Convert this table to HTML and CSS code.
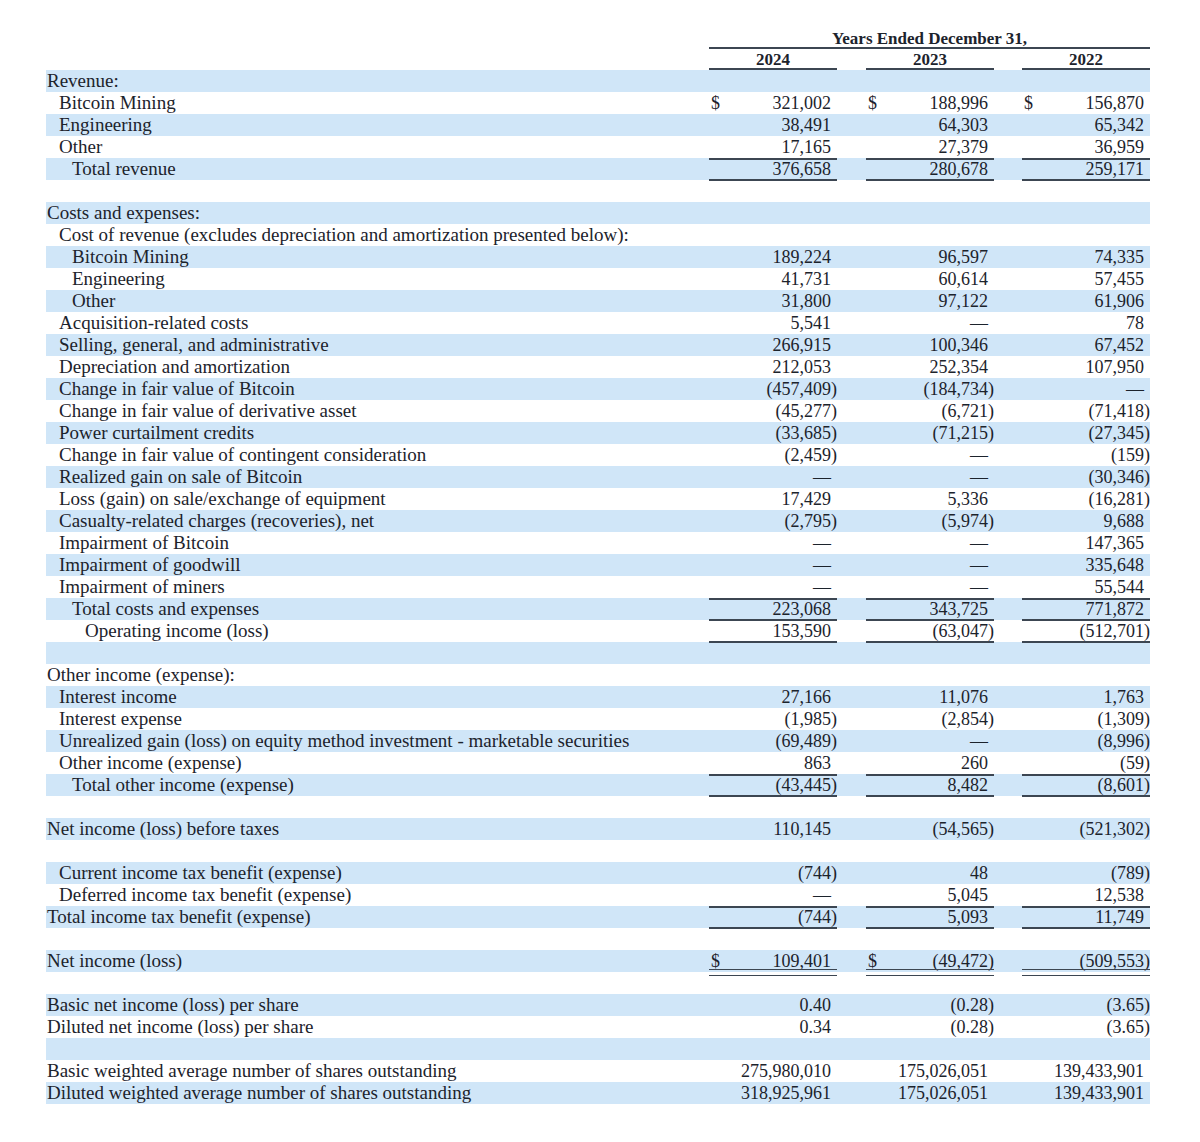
FILE: index.html
```html
<!DOCTYPE html>
<html lang="en">
<head>
<meta charset="utf-8">
<title>Consolidated Statements of Operations</title>
<link rel="stylesheet" href="styles.css">
</head>
<body>
<div class="stmt">
  <div class="head">
    <div class="hrow1"><div></div><div class="title">Years Ended December 31,</div></div>
    <div class="hrow2"><div></div><div class="yr">2024</div><div></div><div class="yr">2023</div><div></div><div class="yr">2022</div></div>
  </div>
  <div class="rows">
    <div class="row"><div class="lbl">Revenue:</div><div class="val"></div><div></div><div class="val"></div><div></div><div class="val"></div></div>
    <div class="row"><div class="lbl l1">Bitcoin Mining</div><div class="val"><span class="cur">$</span><span class="num">321,002</span></div><div></div><div class="val"><span class="cur">$</span><span class="num">188,996</span></div><div></div><div class="val"><span class="cur">$</span><span class="num">156,870</span></div></div>
    <div class="row"><div class="lbl l1">Engineering</div><div class="val"><span class="num">38,491</span></div><div></div><div class="val"><span class="num">64,303</span></div><div></div><div class="val"><span class="num">65,342</span></div></div>
    <div class="row"><div class="lbl l1">Other</div><div class="val"><span class="num">17,165</span></div><div></div><div class="val"><span class="num">27,379</span></div><div></div><div class="val"><span class="num">36,959</span></div></div>
    <div class="row"><div class="lbl l2">Total revenue</div><div class="val tb"><span class="num">376,658</span></div><div></div><div class="val tb"><span class="num">280,678</span></div><div></div><div class="val tb"><span class="num">259,171</span></div></div>
    <div class="row"><div class="lbl"></div><div class="val"></div><div></div><div class="val"></div><div></div><div class="val"></div></div>
    <div class="row"><div class="lbl">Costs and expenses:</div><div class="val"></div><div></div><div class="val"></div><div></div><div class="val"></div></div>
    <div class="row"><div class="lbl l1">Cost of revenue (excludes depreciation and amortization presented below):</div><div class="val"></div><div></div><div class="val"></div><div></div><div class="val"></div></div>
    <div class="row"><div class="lbl l2">Bitcoin Mining</div><div class="val"><span class="num">189,224</span></div><div></div><div class="val"><span class="num">96,597</span></div><div></div><div class="val"><span class="num">74,335</span></div></div>
    <div class="row"><div class="lbl l2">Engineering</div><div class="val"><span class="num">41,731</span></div><div></div><div class="val"><span class="num">60,614</span></div><div></div><div class="val"><span class="num">57,455</span></div></div>
    <div class="row"><div class="lbl l2">Other</div><div class="val"><span class="num">31,800</span></div><div></div><div class="val"><span class="num">97,122</span></div><div></div><div class="val"><span class="num">61,906</span></div></div>
    <div class="row"><div class="lbl l1">Acquisition-related costs</div><div class="val"><span class="num">5,541</span></div><div></div><div class="val"><span class="num">—</span></div><div></div><div class="val"><span class="num">78</span></div></div>
    <div class="row"><div class="lbl l1">Selling, general, and administrative</div><div class="val"><span class="num">266,915</span></div><div></div><div class="val"><span class="num">100,346</span></div><div></div><div class="val"><span class="num">67,452</span></div></div>
    <div class="row"><div class="lbl l1">Depreciation and amortization</div><div class="val"><span class="num">212,053</span></div><div></div><div class="val"><span class="num">252,354</span></div><div></div><div class="val"><span class="num">107,950</span></div></div>
    <div class="row"><div class="lbl l1">Change in fair value of Bitcoin</div><div class="val"><span class="num">(457,409<span class="cp">)</span></span></div><div></div><div class="val"><span class="num">(184,734<span class="cp">)</span></span></div><div></div><div class="val"><span class="num">—</span></div></div>
    <div class="row"><div class="lbl l1">Change in fair value of derivative asset</div><div class="val"><span class="num">(45,277<span class="cp">)</span></span></div><div></div><div class="val"><span class="num">(6,721<span class="cp">)</span></span></div><div></div><div class="val"><span class="num">(71,418<span class="cp">)</span></span></div></div>
    <div class="row"><div class="lbl l1">Power curtailment credits</div><div class="val"><span class="num">(33,685<span class="cp">)</span></span></div><div></div><div class="val"><span class="num">(71,215<span class="cp">)</span></span></div><div></div><div class="val"><span class="num">(27,345<span class="cp">)</span></span></div></div>
    <div class="row"><div class="lbl l1">Change in fair value of contingent consideration</div><div class="val"><span class="num">(2,459<span class="cp">)</span></span></div><div></div><div class="val"><span class="num">—</span></div><div></div><div class="val"><span class="num">(159<span class="cp">)</span></span></div></div>
    <div class="row"><div class="lbl l1">Realized gain on sale of Bitcoin</div><div class="val"><span class="num">—</span></div><div></div><div class="val"><span class="num">—</span></div><div></div><div class="val"><span class="num">(30,346<span class="cp">)</span></span></div></div>
    <div class="row"><div class="lbl l1">Loss (gain) on sale/exchange of equipment</div><div class="val"><span class="num">17,429</span></div><div></div><div class="val"><span class="num">5,336</span></div><div></div><div class="val"><span class="num">(16,281<span class="cp">)</span></span></div></div>
    <div class="row"><div class="lbl l1">Casualty-related charges (recoveries), net</div><div class="val"><span class="num">(2,795<span class="cp">)</span></span></div><div></div><div class="val"><span class="num">(5,974<span class="cp">)</span></span></div><div></div><div class="val"><span class="num">9,688</span></div></div>
    <div class="row"><div class="lbl l1">Impairment of Bitcoin</div><div class="val"><span class="num">—</span></div><div></div><div class="val"><span class="num">—</span></div><div></div><div class="val"><span class="num">147,365</span></div></div>
    <div class="row"><div class="lbl l1">Impairment of goodwill</div><div class="val"><span class="num">—</span></div><div></div><div class="val"><span class="num">—</span></div><div></div><div class="val"><span class="num">335,648</span></div></div>
    <div class="row"><div class="lbl l1">Impairment of miners</div><div class="val"><span class="num">—</span></div><div></div><div class="val"><span class="num">—</span></div><div></div><div class="val"><span class="num">55,544</span></div></div>
    <div class="row"><div class="lbl l2">Total costs and expenses</div><div class="val tb"><span class="num">223,068</span></div><div></div><div class="val tb"><span class="num">343,725</span></div><div></div><div class="val tb"><span class="num">771,872</span></div></div>
    <div class="row"><div class="lbl l3">Operating income (loss)</div><div class="val b"><span class="num">153,590</span></div><div></div><div class="val b"><span class="num">(63,047<span class="cp">)</span></span></div><div></div><div class="val b"><span class="num">(512,701<span class="cp">)</span></span></div></div>
    <div class="row"><div class="lbl"></div><div class="val"></div><div></div><div class="val"></div><div></div><div class="val"></div></div>
    <div class="row"><div class="lbl">Other income (expense):</div><div class="val"></div><div></div><div class="val"></div><div></div><div class="val"></div></div>
    <div class="row"><div class="lbl l1">Interest income</div><div class="val"><span class="num">27,166</span></div><div></div><div class="val"><span class="num">11,076</span></div><div></div><div class="val"><span class="num">1,763</span></div></div>
    <div class="row"><div class="lbl l1">Interest expense</div><div class="val"><span class="num">(1,985<span class="cp">)</span></span></div><div></div><div class="val"><span class="num">(2,854<span class="cp">)</span></span></div><div></div><div class="val"><span class="num">(1,309<span class="cp">)</span></span></div></div>
    <div class="row"><div class="lbl l1">Unrealized gain (loss) on equity method investment - marketable securities</div><div class="val"><span class="num">(69,489<span class="cp">)</span></span></div><div></div><div class="val"><span class="num">—</span></div><div></div><div class="val"><span class="num">(8,996<span class="cp">)</span></span></div></div>
    <div class="row"><div class="lbl l1">Other income (expense)</div><div class="val"><span class="num">863</span></div><div></div><div class="val"><span class="num">260</span></div><div></div><div class="val"><span class="num">(59<span class="cp">)</span></span></div></div>
    <div class="row"><div class="lbl l2">Total other income (expense)</div><div class="val tb"><span class="num">(43,445<span class="cp">)</span></span></div><div></div><div class="val tb"><span class="num">8,482</span></div><div></div><div class="val tb"><span class="num">(8,601<span class="cp">)</span></span></div></div>
    <div class="row"><div class="lbl"></div><div class="val"></div><div></div><div class="val"></div><div></div><div class="val"></div></div>
    <div class="row"><div class="lbl">Net income (loss) before taxes</div><div class="val"><span class="num">110,145</span></div><div></div><div class="val"><span class="num">(54,565<span class="cp">)</span></span></div><div></div><div class="val"><span class="num">(521,302<span class="cp">)</span></span></div></div>
    <div class="row"><div class="lbl"></div><div class="val"></div><div></div><div class="val"></div><div></div><div class="val"></div></div>
    <div class="row"><div class="lbl l1">Current income tax benefit (expense)</div><div class="val"><span class="num">(744<span class="cp">)</span></span></div><div></div><div class="val"><span class="num">48</span></div><div></div><div class="val"><span class="num">(789<span class="cp">)</span></span></div></div>
    <div class="row"><div class="lbl l1">Deferred income tax benefit (expense)</div><div class="val"><span class="num">—</span></div><div></div><div class="val"><span class="num">5,045</span></div><div></div><div class="val"><span class="num">12,538</span></div></div>
    <div class="row"><div class="lbl">Total income tax benefit (expense)</div><div class="val tb"><span class="num">(744<span class="cp">)</span></span></div><div></div><div class="val tb"><span class="num">5,093</span></div><div></div><div class="val tb"><span class="num">11,749</span></div></div>
    <div class="row"><div class="lbl"></div><div class="val"></div><div></div><div class="val"></div><div></div><div class="val"></div></div>
    <div class="row"><div class="lbl">Net income (loss)</div><div class="val dbl"><span class="cur">$</span><span class="num">109,401</span></div><div></div><div class="val dbl"><span class="cur">$</span><span class="num">(49,472<span class="cp">)</span></span></div><div></div><div class="val dbl"><span class="num">(509,553<span class="cp">)</span></span></div></div>
    <div class="row"><div class="lbl"></div><div class="val"></div><div></div><div class="val"></div><div></div><div class="val"></div></div>
    <div class="row"><div class="lbl">Basic net income (loss) per share</div><div class="val"><span class="num">0.40</span></div><div></div><div class="val"><span class="num">(0.28<span class="cp">)</span></span></div><div></div><div class="val"><span class="num">(3.65<span class="cp">)</span></span></div></div>
    <div class="row"><div class="lbl">Diluted net income (loss) per share</div><div class="val"><span class="num">0.34</span></div><div></div><div class="val"><span class="num">(0.28<span class="cp">)</span></span></div><div></div><div class="val"><span class="num">(3.65<span class="cp">)</span></span></div></div>
    <div class="row"><div class="lbl"></div><div class="val"></div><div></div><div class="val"></div><div></div><div class="val"></div></div>
    <div class="row"><div class="lbl">Basic weighted average number of shares outstanding</div><div class="val"><span class="num">275,980,010</span></div><div></div><div class="val"><span class="num">175,026,051</span></div><div></div><div class="val"><span class="num">139,433,901</span></div></div>
    <div class="row"><div class="lbl">Diluted weighted average number of shares outstanding</div><div class="val"><span class="num">318,925,961</span></div><div></div><div class="val"><span class="num">175,026,051</span></div><div></div><div class="val"><span class="num">139,433,901</span></div></div>
  </div>
</div>
</body>
</html>
```

FILE: styles.css
```css
:root {
  --ink: #1c232c;
  --rule: #3c4652;
  --band: #d0e6f8;
}
* { box-sizing: border-box; }
body {
  margin: 0;
  background: #fff;
  color: var(--ink);
  font-family: "Liberation Serif", "Times New Roman", serif;
}
.stmt {
  width: 1104px;
  margin-left: 46px;
  padding-top: 28px;
}
.hrow1 {
  display: grid;
  grid-template-columns: 663px 441px;
  height: 21px;
}
.hrow2 {
  display: grid;
  grid-template-columns: 663px 128px 29px 128px 28px 128px;
  height: 21px;
}
.title, .yr {
  font-weight: bold;
  font-size: 17px;
  height: 21px;
  line-height: 22px;
  text-align: center;
  border-bottom: 2px solid var(--rule);
}
.row {
  display: grid;
  grid-template-columns: 663px 128px 29px 128px 28px 128px;
  height: 22px;
  font-size: 18px;
  line-height: 23px;
}
.rows .row:nth-child(odd) { background: var(--band); }
.lbl { padding-left: 1px; white-space: nowrap; font-size: 19px; line-height: 21px; }
.l1 { padding-left: 13px; }
.l2 { padding-left: 26px; }
.l3 { padding-left: 39px; }
.val {
  display: flex;
  padding: 0 6px 0 2px;
  position: relative;
  white-space: nowrap;
}
.num { margin-left: auto; }
.cp { margin-right: -6px; }
.tb { box-shadow: inset 0 2px 0 var(--rule), inset 0 -2px 0 var(--rule); }
.b { box-shadow: inset 0 -2px 0 var(--rule); }
.dbl::after {
  content: "";
  position: absolute;
  left: 0;
  right: 0;
  bottom: -3px;
  height: 5px;
  border-top: 1.5px solid var(--rule);
  border-bottom: 1.5px solid var(--rule);
}
```
